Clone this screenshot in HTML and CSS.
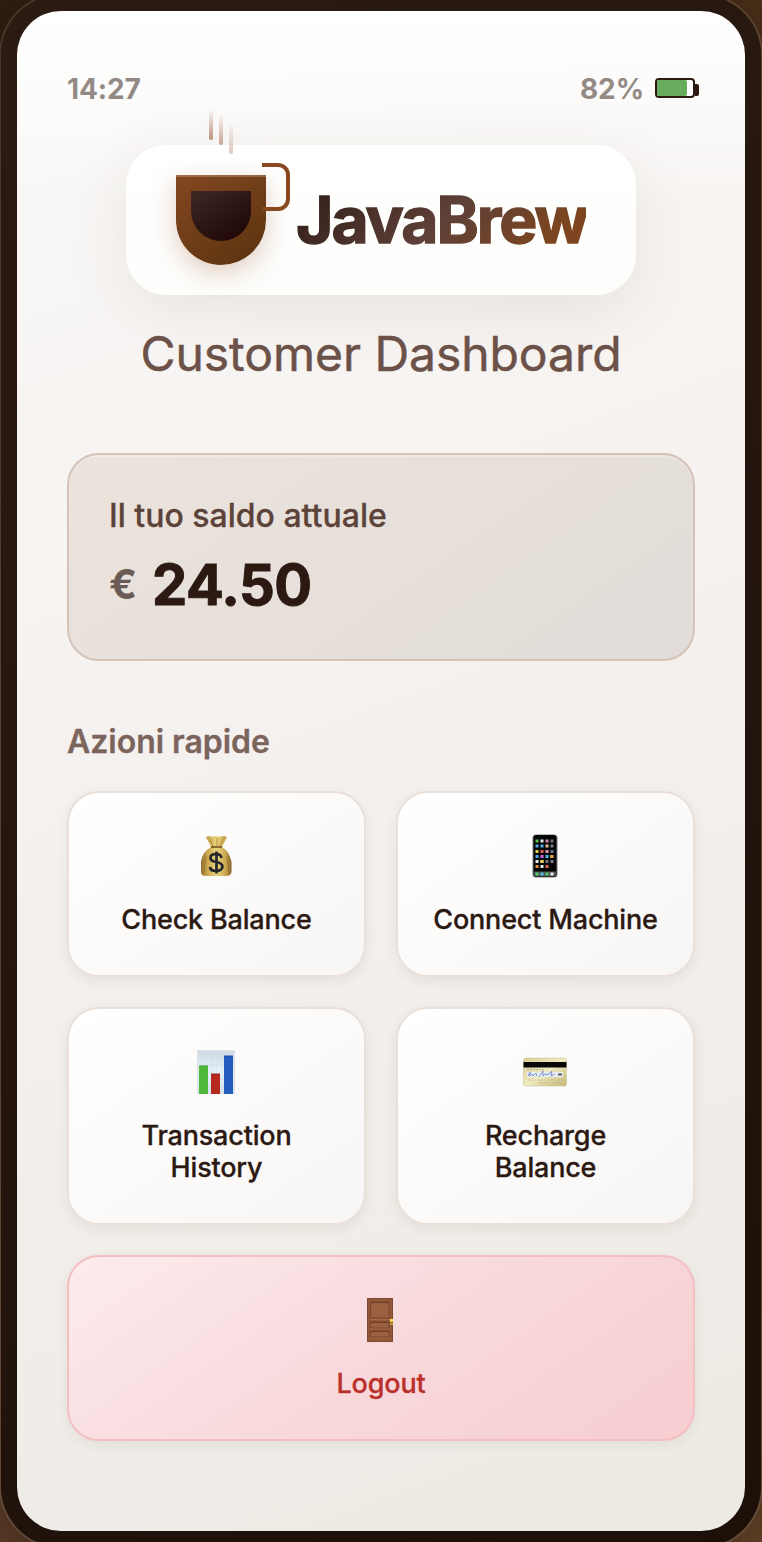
FILE: index.html
```html
<!DOCTYPE html>
<html lang="it">
<head>
<meta charset="utf-8">
<title>JavaBrew</title>
<link rel="stylesheet" href="styles.css">
</head>
<body>
<div class="phone">
  <main class="screen">
    <header class="status">
      <span class="status-text">14:27</span>
      <div class="power"><span class="status-text">82%</span><div class="battery"><div class="charge"></div></div></div>
    </header>
    <section class="brand">
      <div class="cup"><div class="coffee"></div><div class="handle"></div><i class="steam s1"></i><i class="steam s2"></i><i class="steam s3"></i></div>
      <div class="name">JavaBrew</div>
    </section>
    <h1 class="subtitle">Customer Dashboard</h1>
    <section class="balance">
      <div class="balance-label">Il tuo saldo attuale</div>
      <div class="amount"><span class="currency">€</span><span class="value">24.50</span></div>
    </section>
    <h2 class="heading">Azioni rapide</h2>
    <div class="grid">
      <button class="tile">
        <svg class="icon" viewBox="0 0 44 44">
          <defs><linearGradient id="bag"><stop offset="0" stop-color="#8d692c"/><stop offset=".2" stop-color="#c9a54c"/><stop offset=".5" stop-color="#ead57e"/><stop offset=".8" stop-color="#cba850"/><stop offset="1" stop-color="#86602a"/></linearGradient></defs>
          <path d="M12 3Q15 1 18 3Q22 1 25 3Q30 1 33 3L28 13Q36 18 37.500 28V38Q37 42 32 42H12Q7 42 7 38V28Q8 18 17 13Z" fill="url(#bag)"/>
          <path d="M16 5L19 12M23 4V12M29 5L26 12M12 22L10 38M33 22L35 38" stroke="#8e6a2c" stroke-width="1" fill="none" opacity=".6"/>
          <path d="M17 13H28" stroke="#765020" stroke-width="1.600"/>
          <path d="M27.500 24Q27 20 22 20Q16.500 20 16.500 24Q16.500 27 22 28Q28.500 29 28.500 33Q27.500 37 22 37Q16.500 37 16 33M22.500 17.500V39.500" stroke="#25272d" stroke-width="2.700" fill="none"/>
        </svg>
        <span>Check Balance</span>
      </button>
      <button class="tile">
        <svg class="icon" viewBox="0 0 44 44">
          <rect x="9.500" y=".5" width="25" height="43" rx="3.500" fill="#777b7b"/><rect x="10.500" y="1" width="23" height="42" rx="3" fill="#050607"/><path d="M11 37.500H33V40Q33 42.500 31 42.500H13Q11 42.500 11 40Z" fill="#525654"/>
          <g stroke-width="3" fill="none">
            <path d="M12.500 7H15.500M27 22.500H30" stroke="#58c84f"/><path d="M17.500 7H20.500M17.500 27.500H20.500" stroke="#e5e9e6"/><path d="M22.500 7H25.500M22.500 17.500H25.500" stroke="#d789b0"/><path d="M27.500 7H30.500M27.500 17.500H30.500" stroke="#73777b"/>
            <path d="M12.500 12H15.500M17.500 12H20.500M12.500 22.500H15.500" stroke="#53a9e8"/><path d="M22.500 12H25.500" stroke="#e1bd90"/><path d="M27.500 12H30.500M27.500 27.500H30.500" stroke="#777c80"/>
            <path d="M12.500 17.500H15.500M17.500 27.500H20.500" stroke="#e8cf48"/><path d="M17.500 17.500H20.500M22.500 32.500H25.500" stroke="#e85c4f"/><path d="M17.500 22.500H20.500" stroke="#d05de5"/><path d="M22.500 22.500H25.500" stroke="#45bde9"/><path d="M27.500 22.500H30.500" stroke="#eda13e"/>
            <path d="M12.500 27.500H15.500M17.500 32.500H20.500" stroke="#e8e8e4"/><path d="M22.500 27.500H25.500" stroke="#777"/><path d="M12.500 32.500H15.500" stroke="#e5943f"/><path d="M12.500 40H15.500M22.500 40H25.500" stroke="#50ca70"/><path d="M17.500 40H20.500" stroke="#4bbcea"/><path d="M27.500 40H30.500" stroke="#eee"/>
          </g>
        </svg>
        <span>Connect Machine</span>
      </button>
      <button class="tile">
        <svg class="icon" viewBox="0 0 44 44">
          <defs><linearGradient id="chart" x2="0" y2="1"><stop stop-color="#cfdae6"/><stop offset=".5" stop-color="#e7f1f8"/><stop offset="1" stop-color="#d4e3ef"/></linearGradient></defs>
          <rect x="3.500" y=".5" width="37" height="43" fill="url(#chart)" stroke="#dde2e6"/>
          <path d="M8 1V43M13 1V43M18 1V43M23 1V43M28 1V43M33 1V43M4 8H40M4 15H40M4 22H40M4 29H40M4 36H40" stroke="#cbd9e6" stroke-width=".4"/>
          <path d="M5 16H14V44H5Z" fill="#4eb838"/><path d="M17 24H26V44H17Z" fill="#b62820"/><path d="M30 6H39V44H30Z" fill="#245cbe"/>
          <path d="M5 16H14" stroke="#3c9931"/><path d="M17 24H26" stroke="#8e2420"/><path d="M30 6H39" stroke="#23489a"/>
        </svg>
        <span>Transaction<br>History</span>
      </button>
      <button class="tile">
        <svg class="icon" viewBox="0 0 44 44">
          <defs><linearGradient id="card" y2="1"><stop stop-color="#d8cd96"/><stop offset=".5" stop-color="#f0ebc1"/><stop offset="1" stop-color="#c5b776"/></linearGradient></defs>
          <rect x=".5" y="8" width="43" height="28" rx="2" fill="url(#card)" stroke="#c9bf91" stroke-width=".5"/>
          <path d="M.5 12H43.500V17.500H.5Z" fill="#080806"/><path d="M4 19.700H21" stroke="#a59c73" stroke-width=".8" stroke-dasharray="2 1"/>
          <path d="M4 22H40V27H4Z" fill="#e9edf3"/><path d="M5 26Q8 19 7 24Q5 28 9 24L10 26L13 23L14 26M16 27L20 21L20 26Q23 22 23 25L26 24L29 21L28 26L32 24" fill="none" stroke="#718cc5" stroke-width=".9"/><path d="M35 24.500H39" stroke="#565950" stroke-width="2"/>
          <path d="M5 30H12M15 30H22M25 30H32M35 30H41M16 33H26M30 33H40" stroke="#b6ac7e" stroke-width=".8" stroke-dasharray="2 1"/>
        </svg>
        <span>Recharge<br>Balance</span>
      </button>
      <button class="tile logout">
        <svg class="icon" viewBox="0 0 44 44">
          <rect x="9.500" y=".5" width="25" height="43" fill="#915838" stroke="#7d4931"/>
          <path d="M12.500 4H31V20H12.500ZM12.500 24H31V30H12.500ZM12.500 33H31V39H12.500Z" fill="#9a6040" stroke="#7b452d"/>
          <path d="M12 4.500H31.500M12 24.500H31.500M12 33.500H31.500" stroke="#6e3d26" stroke-width="1.200"/><path d="M12 21.500H31.500M12 31H31.500M12 40H31.500" stroke="#a87050" stroke-width=".8"/>
          <path d="M32 21H35V24H32Z" fill="#f0dc50"/><path d="M32 25H35V27H32Z" fill="#c99e28"/>
        </svg>
        <span>Logout</span>
      </button>
    </div>
  </main>
</div>
</body>
</html>
```
FILE: styles.css
```css
* { box-sizing: border-box; }
body { margin: 0; height: 1542px; overflow: hidden; background: linear-gradient(90deg, transparent 50%, rgba(110,76,38,.4)), linear-gradient(#2f1d10, #5c3c28); font-family: Inter, "Liberation Sans", sans-serif; color: #2b1912; }
.phone { width: 760px; height: 1552px; margin: -5px auto 0; padding: 16px; border-radius: 60px; background: linear-gradient(145deg, #2b1b12, #1c1009); box-shadow: 0 0 0 2px rgba(155,130,110,.28), 0 15px 50px rgba(0,0,0,.3); }
.screen { height: 1520px; padding: 60px 50px 0; border-radius: 44px; background: linear-gradient(180deg, #fff 0, rgba(255,255,255,0) 190px), linear-gradient(160deg, #faf9f8 0, #f4f0ed 50%, #edeae4 100%); overflow: hidden; }
.status { height: 34px; display: flex; align-items: center; justify-content: space-between; }
.status-text { padding-top: 2px; font-size: 28px; line-height: 34px; font-weight: 700; letter-spacing: -.1px; color: #938a85; }
.power { display: flex; align-items: center; gap: 11px; }
.battery { position: relative; width: 40px; height: 20px; border: 2px solid #2c1a11; border-radius: 4px; background: #fff; }
.battery::after { content: ""; position: absolute; right: -6px; top: 4px; width: 4px; height: 12px; border-radius: 0 2px 2px 0; background: #2c1a11; }
.charge { width: 82%; height: 16px; background: #68ad5d; border-radius: 2px; }
.brand { width: 510px; height: 150px; margin: 40px auto 0; padding: 30px 50px; display: flex; gap: 30px; border-radius: 40px; background: linear-gradient(#fff, #fdfdfb); box-shadow: 0 16px 64px rgba(82,49,27,.09); }
.cup { position: relative; flex: none; width: 90px; height: 90px; padding: 16px 15px; border-radius: 0 0 45px 45px; background: linear-gradient(145deg, #834720, #59330f); box-shadow: 0 8px 24px rgba(139,69,19,.25), inset 0 2px 0 rgba(255,255,255,.22); }
.coffee { width: 60px; height: 50px; border-radius: 0 0 30px 30px; background: linear-gradient(145deg, #3e2723, #1c0305); }
.handle { position: absolute; left: 86px; top: -12px; width: 28px; height: 48px; border: 4px solid #87481f; border-left: 0; border-radius: 0 12px 12px 0; }
.steam { position: absolute; width: 4px; height: 31px; border-radius: 2px; background: linear-gradient(transparent, #ba9078); }
.s1 { left: 33px; top: -66px; }
.s2 { left: 43px; top: -61px; opacity: .8; }
.s3 { left: 53px; top: -52px; opacity: .5; }
.name { width: 290px; height: 90px; font-size: 64px; line-height: 90px; font-weight: 700; letter-spacing: -2px; white-space: nowrap; color: transparent; -webkit-text-stroke: 1.4px transparent; background: linear-gradient(135deg, #36211c 10%, #5d4037 50%, #7d451f 85%); -webkit-background-clip: text; background-clip: text; }
.subtitle { margin: 30px 0 0; font-size: 48px; line-height: 58px; font-weight: 400; letter-spacing: -.05px; -webkit-text-stroke: .5px #6b5148; text-align: center; color: #6b5148; white-space: nowrap; }
.balance { height: 208px; margin-top: 70px; padding: 41px 40px 39px; border: 2px solid #d4c3b8; border-radius: 32px; background: linear-gradient(145deg, #ece3dc, #e1dcd8); box-shadow: inset 0 2px 0 rgba(255,255,255,.25); }
.balance-label { font-size: 32px; line-height: 40px; font-weight: 500; -webkit-text-stroke: .3px #5c4339; color: #5c4339; }
.amount { display: flex; align-items: center; gap: 15px; height: 68px; margin-top: 15px; }
.currency { margin-top: -2px; font-size: 41px; font-weight: 700; color: #6a5c54; }
.value { font-size: 56px; font-weight: 700; letter-spacing: -.6px; -webkit-text-stroke: 1px #2b1912; color: #2b1912; }
.heading { margin: 61px 0 0; font-size: 32px; line-height: 40px; font-weight: 600; -webkit-text-stroke: .3px #7b645c; letter-spacing: -.03px; color: #7b645c; }
.grid { display: grid; grid-template-columns: 1fr 1fr; grid-template-rows: 186px 218px 186px; gap: 30px; margin-top: 29px; }
.tile { display: flex; flex-direction: column; align-items: center; gap: 26px; padding: 41px 20px 0; border: 2px solid #ebe0d9; border-radius: 32px; background: linear-gradient(145deg, #fff, #f8f6f4); box-shadow: 0 4px 12px rgba(62,39,35,.07); font: 500 27px/32px Inter, "Liberation Sans", sans-serif; letter-spacing: -.18px; -webkit-text-stroke: .3px currentColor; color: #2b1912; }
.icon { display: block; flex: none; width: 44px; height: 44px; margin-right: 2px; }
.logout { grid-column: 1 / -1; border-color: #f4bfc1; background: linear-gradient(145deg, #fdebed, #f8d9dc 50%, #f7cdd0); color: #ba302c; }
```
